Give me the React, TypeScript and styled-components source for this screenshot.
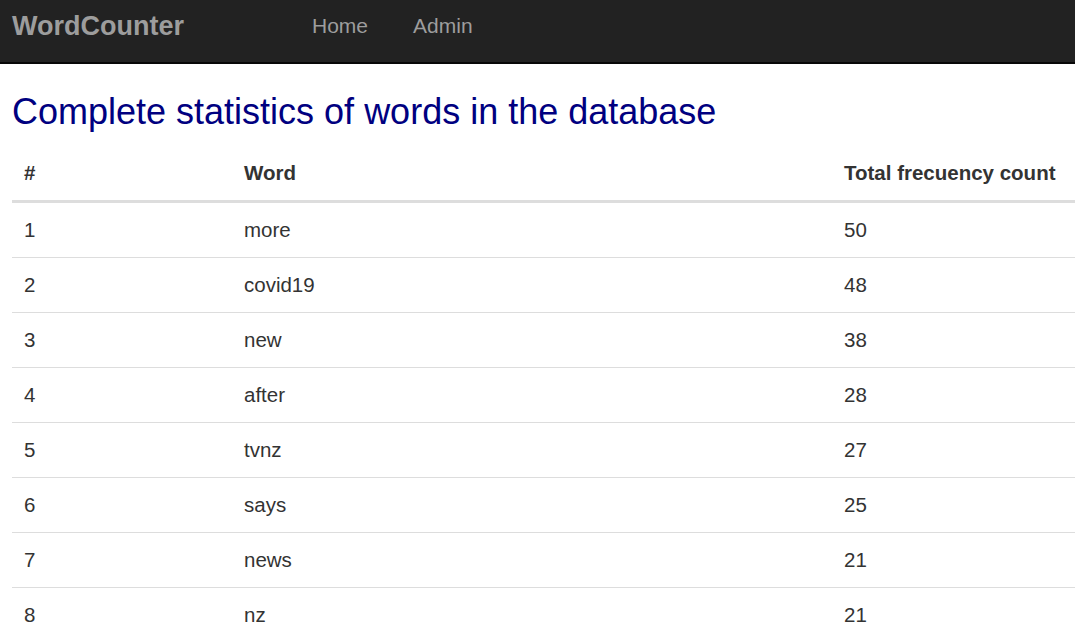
import styled, { createGlobalStyle } from "styled-components";

const GlobalStyle = createGlobalStyle`
  body {
    margin: 0;
    font-family: "Liberation Sans", Arial, sans-serif;
    font-size: 20.5px;
    color: #333;
    background: #fff;
    overflow: hidden;
  }
`;

const Navbar = styled.nav`
  height: 62px;
  background-color: #222;
  border-bottom: 2px solid #080808;
  display: flex;
  align-items: center;
  padding: 0 12px;
`;

const Brand = styled.a`
  font-size: 27px;
  font-weight: bold;
  color: #9d9d9d;
  text-decoration: none;
  width: 300px;
  margin-top: -10px;
`;

const NavLinks = styled.ul`
  display: flex;
  list-style: none;
  margin: 0;
  padding: 0;
  gap: 45px;
  margin-top: -10px;
`;

const NavLink = styled.a`
  font-size: 21px;
  color: #9d9d9d;
  text-decoration: none;
`;

const Main = styled.main`
  padding: 0 12px;
`;

const Title = styled.h2`
  font-size: 36px;
  font-weight: normal;
  color: #000080;
  margin: 27px 0 13px;
  line-height: 42px;
`;

const Table = styled.table`
  width: 1075px;
  border-collapse: collapse;
`;

const Th = styled.th<{ w?: number }>`
  text-align: left;
  font-weight: bold;
  padding: 12px 12px 12px;
  line-height: 30px;
  border-bottom: 3px solid #ddd;
  width: ${({ w }) => (w ? `${w - 24}px` : "auto")};
  white-space: nowrap;
`;

const Td = styled.td`
  padding: 12px;
  line-height: 30px;
  border-top: 1px solid #ddd;
`;

const rows = [
  ["more", 50],
  ["covid19", 48],
  ["new", 38],
  ["after", 28],
  ["tvnz", 27],
  ["says", 25],
  ["news", 21],
  ["nz", 21],
];

export default function App() {
  return (
    <>
      <GlobalStyle />
      <Navbar>
        <Brand href="#">WordCounter</Brand>
        <NavLinks>
          <li>
            <NavLink href="#">Home</NavLink>
          </li>
          <li>
            <NavLink href="#">Admin</NavLink>
          </li>
        </NavLinks>
      </Navbar>
      <Main>
        <Title>Complete statistics of words in the database</Title>
        <Table>
          <thead>
            <tr>
              <Th w={220}>#</Th>
              <Th w={600}>Word</Th>
              <Th>Total frecuency count</Th>
            </tr>
          </thead>
          <tbody>
            {rows.map(([word, count], i) => (
              <tr key={i}>
                <Td>{i + 1}</Td>
                <Td>{word}</Td>
                <Td>{count}</Td>
              </tr>
            ))}
          </tbody>
        </Table>
      </Main>
    </>
  );
}
